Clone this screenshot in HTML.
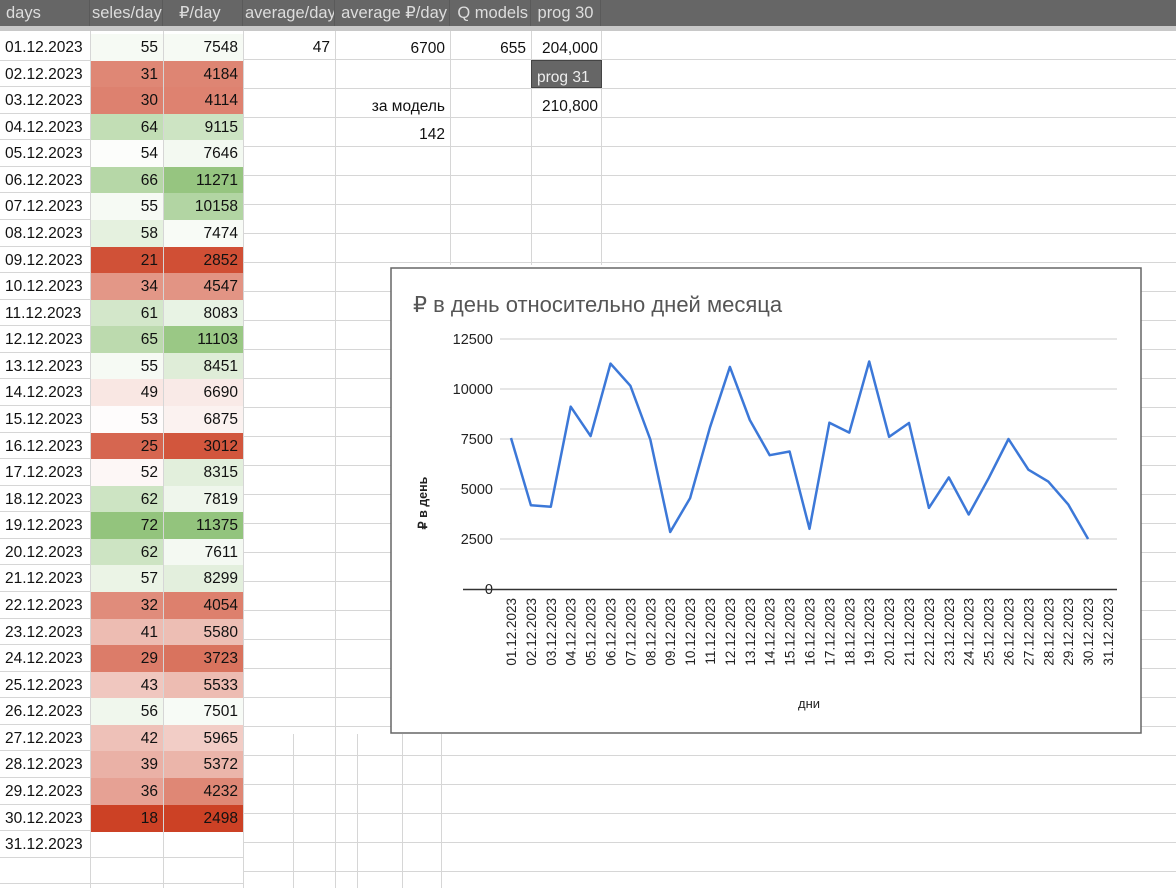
<!DOCTYPE html>
<html><head><meta charset="utf-8">
<style>
*{margin:0;padding:0;box-sizing:border-box}
html{height:888px;overflow:hidden}
body{width:1176px;height:888px;overflow:hidden;background:#fff;font-family:"Liberation Sans",Arial,sans-serif;position:relative;font-size:15.5px;color:#111}
.a{position:absolute}
.hd{position:absolute;top:0;left:0;width:1176px;height:26px;background:#666;}
.hd div{position:absolute;top:0;height:26px;line-height:26px;color:#ddd;font-size:16.5px;border-right:1px solid #5a5a5a;padding:0 2px;white-space:nowrap;overflow:hidden}
.band{position:absolute;top:26px;left:0;width:1176px;height:5px;background:#c8c8c8}
.hl{position:absolute;height:1px;background:#d6d6d6}
.vl{position:absolute;width:1px;background:#d6d6d6}
.c{position:absolute;height:27px;line-height:27px;padding:0 5px;white-space:nowrap}
.r{text-align:right}
</style></head><body>
<div id="grid"></div>
<div class="hd">
<div style="left:0;width:90px;padding-left:6px">days</div>
<div style="left:90px;width:73px;text-align:right">seles/day</div>
<div style="left:163px;width:80px;padding-left:16px">₽/day</div>
<div style="left:243px;width:92px;text-align:right">average/day</div>
<div style="left:335px;width:115px;text-align:right">average ₽/day</div>
<div style="left:450px;width:81px;text-align:right">Q models</div>
<div style="left:531px;width:70px;text-align:center">prog 30</div>
</div>
<div class="band"></div>
<div id="cells"></div>
<svg class="a" style="left:390px;top:267px" width="752" height="467" viewBox="390 267 752 467">
<rect x="391" y="268" width="750" height="465" fill="#fff" stroke="#666" stroke-width="1.5"/>
<text x="413" y="312" font-size="22" fill="#555" font-family="Liberation Sans,Arial,sans-serif">₽ в день относительно дней месяца</text>
<g id="ch"></g>
</svg>
<script>
var s=[55,31,30,64,54,66,55,58,21,34,61,65,55,49,53,25,52,62,72,62,57,32,41,29,43,56,42,39,36,18];
var r=[7548,4184,4114,9115,7646,11271,10158,7474,2852,4547,8083,11103,8451,6690,6875,3012,8315,7819,11375,7611,8299,4054,5580,3723,5533,7501,5965,5372,4232,2498];
function col(v,min,mid,max){var R=[204,65,37],G=[147,196,125],t,c;
 if(v<mid){t=(mid-v)/(mid-min);c=R}else{t=(v-mid)/(max-mid);c=G}
 return 'rgb('+[0,1,2].map(function(i){return Math.round(255-(255-c[i])*t)}).join(',')+')'}
var g='',h='';
for(var y=59;y<888;y+=29)g+='<div class="hl" style="left:243px;width:933px;top:'+y+'px"></div>';
g+='<div class="vl" style="left:335px;top:31px;height:857px"></div>';
[450,531,601].forEach(function(x){g+='<div class="vl" style="left:'+x+'px;top:31px;height:234px"></div>'});
[293,357,402,441].forEach(function(x){g+='<div class="vl" style="left:'+x+'px;top:734px;height:154px"></div>'});
g+='<div class="vl" style="left:243px;top:31px;height:857px"></div>';
document.getElementById('grid').innerHTML=g;
var RH=26.57,T=34;
for(var i=0;i<31;i++){var d=(i<9?'0':'')+(i+1)+'.12.2023',y=T+i*RH;
 h+='<div class="hl" style="left:0;width:243px;top:'+(y+RH-1).toFixed(1)+'px"></div>';
 h+='<div class="c" style="left:0;width:90px;top:'+y.toFixed(1)+'px;height:'+RH+'px">'+d+'</div>';
 if(i<30){
 h+='<div class="c r" style="left:90px;width:73px;top:'+y.toFixed(1)+'px;height:'+(RH+0.5)+'px;background:'+col(s[i],18,53.5,72)+'">'+s[i]+'</div>';
 h+='<div class="c r" style="left:163px;width:80px;top:'+y.toFixed(1)+'px;height:'+(RH+0.5)+'px;background:'+col(r[i],2498,7200,11375)+'">'+r[i]+'</div>';}
}
h+='<div class="hl" style="left:0;width:243px;top:'+(T+32*RH-1).toFixed(1)+'px"></div>';
h+='<div class="vl" style="left:90px;top:31px;height:857px"></div><div class="vl" style="left:163px;top:31px;height:857px"></div>';
h+='<div class="c r" style="left:243px;width:92px;top:34px">47</div>';
h+='<div class="c r" style="left:335px;width:115px;top:35px">6700</div>';
h+='<div class="c r" style="left:450px;width:81px;top:35px">655</div>';
h+='<div class="c r" style="left:531px;width:70px;top:35px;padding-right:3px">204,000</div>';
h+='<div class="c" style="left:531px;width:71px;top:60px;height:28px;line-height:34px;background:#666;color:#eee;border:1px solid #444">prog 31</div>';
h+='<div class="c r" style="left:335px;width:115px;top:93px">за модель</div>';
h+='<div class="c r" style="left:531px;width:70px;top:93px;padding-right:3px">210,800</div>';
h+='<div class="c r" style="left:335px;width:115px;top:121px">142</div>';
document.getElementById('cells').innerHTML=h;
var c='',F='font-family="Liberation Sans,Arial,sans-serif"';
for(var v=2500;v<=12500;v+=2500){var yy=589-v/50;c+='<line x1="500" x2="1117" y1="'+yy+'" y2="'+yy+'" stroke="#ccc"/><text x="493" y="'+(yy+5)+'" text-anchor="end" font-size="14.5" fill="#222" '+F+'>'+v+'</text>'}
c+='<text x="493" y="594" text-anchor="end" font-size="14.5" fill="#222" '+F+'>0</text>';
c+='<line x1="463" x2="1117" y1="589.5" y2="589.5" stroke="#333" stroke-width="1.5"/>';
var pts=[];for(var i=0;i<30;i++)pts.push((511+i*19.9).toFixed(1)+','+(589-r[i]/50).toFixed(1));
c+='<polyline points="'+pts.join(' ')+'" fill="none" stroke="#3c78d8" stroke-width="2.5" stroke-linejoin="round"/>';
for(var i=0;i<31;i++){var x=511+i*19.9+5,d=(i<9?'0':'')+(i+1)+'.12.2023';c+='<text transform="translate('+x.toFixed(1)+',598) rotate(-90)" text-anchor="end" font-size="13.5" fill="#222" '+F+'>'+d+'</text>'}
c+='<text transform="translate(427,503) rotate(-90)" text-anchor="middle" font-size="12.5" font-weight="bold" fill="#222" '+F+'>₽ в день</text>';
c+='<text x="809" y="708" text-anchor="middle" font-size="13" fill="#222" '+F+'>дни</text>';
document.getElementById('ch').innerHTML=c;
</script>
</body></html>
